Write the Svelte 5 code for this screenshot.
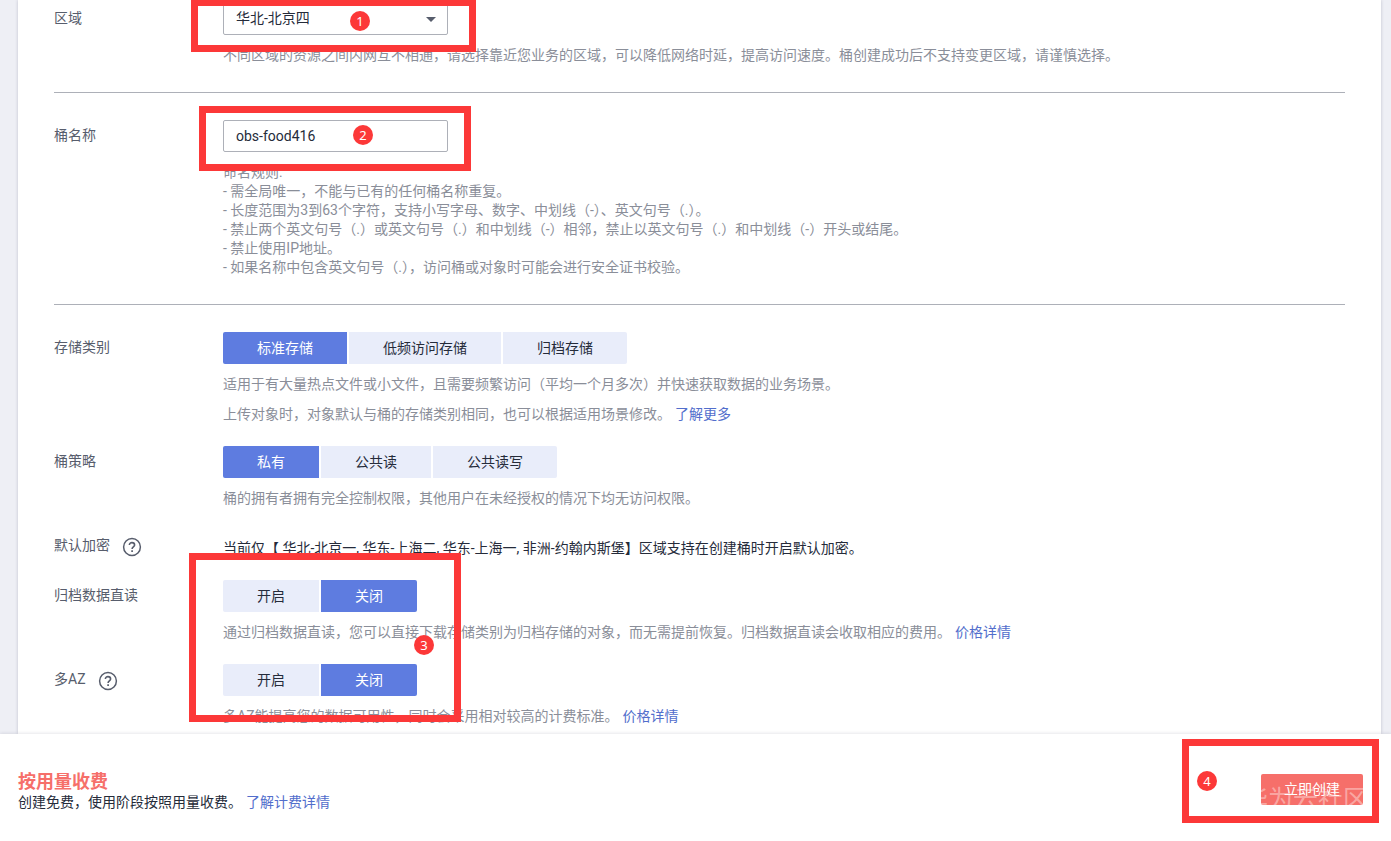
<script lang="ts">
    let bucketName = 'obs-food416';
    let storage = '标准存储';
    let policy = '私有';
    let archive = '关闭';
    let multiAz = '关闭';

    const storageTypes = ['标准存储', '低频访问存储', '归档存储'];
    const policies = ['私有', '公共读', '公共读写'];
    const switches = ['开启', '关闭'];

    const rules = [
        '命名规则:',
        '- 需全局唯一，不能与已有的任何桶名称重复。',
        '- 长度范围为3到63个字符，支持小写字母、数字、中划线（-）、英文句号（.）。',
        '- 禁止两个英文句号（.）或英文句号（.）和中划线（-）相邻，禁止以英文句号（.）和中划线（-）开头或结尾。',
        '- 禁止使用IP地址。',
        '- 如果名称中包含英文句号（.），访问桶或对象时可能会进行安全证书校验。'
    ];
</script>

{#snippet help()}
    <button class="help" type="button" aria-label="帮助">
        <svg width="20" height="20" viewBox="0 0 20 20" fill="none" stroke="currentColor">
            <circle cx="10" cy="10" r="8.4" stroke-width="1.5" />
            <path d="M7.4 8.1C7.4 6.6 8.5 5.6 10 5.6s2.6 1 2.6 2.4c0 1.9-2.5 2-2.5 4" stroke-width="1.6" />
            <path d="M10.1 13.2v1.7" stroke-width="1.7" />
        </svg>
    </button>
{/snippet}

<div class="page">
    <main>
        <div class="row">
            <label class="name" for="region">区域</label>
            <div class="field">
                <div class="select">
                    <select id="region">
                        <option>华北-北京四</option>
                    </select>
                    <svg width="10" height="5" viewBox="0 0 10 5"><path d="M0 0h10L5 5z" fill="#575d6c" /></svg>
                </div>
                <p>不同区域的资源之间内网互不相通，请选择靠近您业务的区域，可以降低网络时延，提高访问速度。桶创建成功后不支持变更区域，请谨慎选择。</p>
                <div class="mark mark-region"><span>1</span></div>
            </div>
        </div>

        <hr />

        <div class="row">
            <label class="name" for="bucket">桶名称</label>
            <div class="field">
                <input id="bucket" type="text" bind:value={bucketName} />
                <div class="rules">
                    {#each rules as rule}
                        <div>{rule}</div>
                    {/each}
                </div>
                <div class="mark mark-bucket"><span>2</span></div>
            </div>
        </div>

        <hr />

        <div class="row">
            <div class="name">存储类别</div>
            <div class="field">
                <div class="segments" role="group" aria-label="存储类别">
                    {#each storageTypes as item}
                        <button type="button" class:active={storage === item} aria-pressed={storage === item} on:click={() => (storage = item)}>{item}</button>
                    {/each}
                </div>
                <p>适用于有大量热点文件或小文件，且需要频繁访问（平均一个月多次）并快速获取数据的业务场景。</p>
                <p>上传对象时，对象默认与桶的存储类别相同，也可以根据适用场景修改。<a href="#storage">了解更多</a></p>
            </div>
        </div>

        <div class="row">
            <div class="name">桶策略</div>
            <div class="field">
                <div class="segments" role="group" aria-label="桶策略">
                    {#each policies as item}
                        <button type="button" class:active={policy === item} aria-pressed={policy === item} on:click={() => (policy = item)}>{item}</button>
                    {/each}
                </div>
                <p>桶的拥有者拥有完全控制权限，其他用户在未经授权的情况下均无访问权限。</p>
            </div>
        </div>

        <div class="row">
            <div class="name">默认加密 {@render help()}</div>
            <div class="field note">当前仅【 华北-北京一, 华东-上海二, 华东-上海一, 非洲-约翰内斯堡】区域支持在创建桶时开启默认加密。</div>
        </div>

        <div class="options">
            <div class="row">
                <div class="name">归档数据直读</div>
                <div class="field">
                    <div class="segments" role="group" aria-label="归档数据直读">
                        {#each switches as item}
                            <button type="button" class:active={archive === item} aria-pressed={archive === item} on:click={() => (archive = item)}>{item}</button>
                        {/each}
                    </div>
                    <p>通过归档数据直读，您可以直接下载存储类别为归档存储的对象，而无需提前恢复。归档数据直读会收取相应的费用。<a href="#archive-price">价格详情</a></p>
                </div>
            </div>

            <div class="row">
                <div class="name">多AZ {@render help()}</div>
                <div class="field">
                    <div class="segments" role="group" aria-label="多AZ">
                        {#each switches as item}
                            <button type="button" class:active={multiAz === item} aria-pressed={multiAz === item} on:click={() => (multiAz = item)}>{item}</button>
                        {/each}
                    </div>
                    <p>多AZ能提高您的数据可用性，同时会采用相对较高的计费标准。<a href="#az-price">价格详情</a></p>
                </div>
            </div>
            <div class="mark mark-options"><span>3</span></div>
        </div>
    </main>

    <footer>
        <div>
            <strong>按用量收费</strong>
            <div class="billing">创建免费，使用阶段按照用量收费。<a href="#billing">了解计费详情</a></div>
        </div>
        <div class="submit">
            <button type="button">立即创建<span class="watermark" aria-hidden="true">华为云社区</span></button>
            <div class="mark mark-submit"><span>4</span></div>
        </div>
    </footer>
</div>

<style>
    :global(body) {
        background: #eeeff5;
    }

    .page {
        --red: #fc3838;
        --blue: #5e7ce0;

        display: flex;
        flex-direction: column;
        min-height: 100vh;
        overflow: hidden;
        font: 14px/19px Roboto, "Noto Sans CJK SC", sans-serif;
        color: #252b3a;
    }

    main {
        flex: 1;
        margin: 0 10px 0 18px;
        padding: 3px 36px 7px;
        background: #fff;
        box-shadow: 0 0 3px rgba(60, 60, 90, .25);
    }

    .row {
        display: flex;
        margin-bottom: 22px;
    }

    .row:has(+ hr),
    .options .row + .row {
        margin-bottom: 0;
    }

    .name {
        display: flex;
        gap: 12px;
        flex: 0 0 169px;
        height: 28px;
        line-height: 30px;
        color: #575d6c;
    }

    .field {
        flex: 1;
        position: relative;
    }

    hr {
        margin: 27px 0;
        border: 0;
        border-top: 1px solid #adb0b8;
    }

    .select {
        display: flex;
        align-items: center;
        position: relative;
        width: 225px;
    }

    .select svg {
        position: absolute;
        right: 12px;
        pointer-events: none;
    }

    select,
    input {
        display: block;
        box-sizing: border-box;
        width: 225px;
        height: 32px;
        padding: 0 12px;
        border: 1px solid #adb0b8;
        border-radius: 2px;
        background: #fff;
        color: inherit;
        font: inherit;
        appearance: none;
    }

    select {
        padding-bottom: 2px;
    }

    p,
    .rules {
        margin: 11px 0 0;
        color: #8a8e99;
    }

    a {
        margin-left: 4px;
        color: #526ecc;
        text-decoration: none;
    }

    .segments {
        display: flex;
        gap: 2px;
    }

    .segments button {
        height: 32px;
        padding: 0 34px;
        border: 0;
        background: #e9edfa;
        color: inherit;
        font: inherit;
    }

    .segments button:first-child {
        border-radius: 2px 0 0 2px;
    }

    .segments button:last-child {
        border-radius: 0 2px 2px 0;
    }

    .segments .active {
        background: var(--blue);
        color: #fff;
    }

    .help {
        width: 20px;
        height: 20px;
        margin-top: 7px;
        padding: 0;
        border: 0;
        background: none;
        color: #575d6c;
    }

    .help svg {
        display: block;
    }

    .note {
        padding-top: 9px;
    }

    .options {
        position: relative;
    }

    footer {
        display: flex;
        justify-content: space-between;
        align-items: flex-start;
        position: relative;
        padding: 38px 28px 28px 18px;
        background: #fff;
        box-shadow: 0 -1px 3px rgba(60, 60, 90, .12);
    }

    strong {
        display: block;
        font-size: 18px;
        line-height: 20px;
        color: #f66f6a;
    }

    .billing {
        line-height: 21px;
    }

    .submit {
        position: relative;
        margin-top: 2px;
    }

    .submit button {
        display: block;
        position: relative;
        overflow: hidden;
        width: 102px;
        height: 31px;
        padding: 0;
        border: 0;
        border-radius: 2px;
        background: #f66f6a;
        color: #fff;
        font: inherit;
    }

    .watermark {
        position: absolute;
        left: -18px;
        top: 13px;
        font-size: 25px;
        line-height: 26px;
        white-space: nowrap;
        color: rgba(255, 255, 255, .4);
    }

    /* numbered step frames drawn over the form */
    .mark {
        position: absolute;
        box-sizing: border-box;
        border: 7px solid var(--red);
        pointer-events: none;
    }

    .mark span {
        position: absolute;
        width: 20px;
        height: 20px;
        border-radius: 50%;
        background: var(--red);
        color: #fff;
        font: 13px/20px "Noto Sans", sans-serif;
        text-align: center;
    }

    .mark-region {
        left: -32px;
        top: -4px;
        width: 285px;
        height: 53px;
    }

    .mark-region span {
        left: 152px;
        top: 5px;
    }

    .mark-bucket {
        left: -24px;
        top: -14px;
        width: 272px;
        height: 65px;
    }

    .mark-bucket span {
        left: 147px;
        top: 12px;
    }

    .mark-options {
        left: 135px;
        top: -27px;
        width: 272px;
        height: 169px;
    }

    .mark-options span {
        left: 218px;
        top: 75px;
    }

    .mark-submit {
        right: -16px;
        top: -35px;
        width: 197px;
        height: 84px;
    }

    .mark-submit span {
        left: 8px;
        top: 25px;
    }
</style>
